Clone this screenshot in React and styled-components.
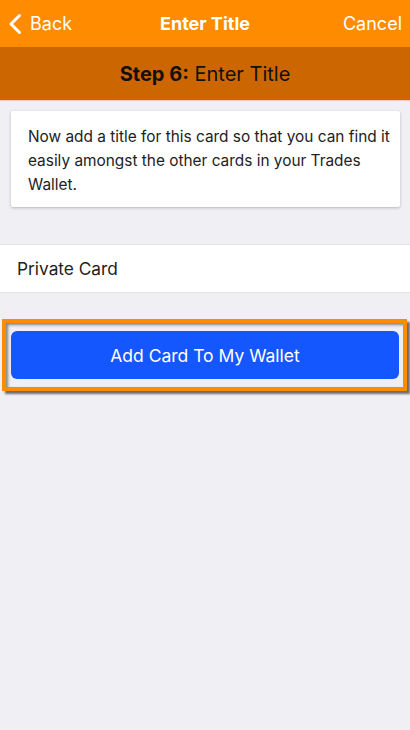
import React from "react";
import styled, { createGlobalStyle } from "styled-components";

const GlobalStyle = createGlobalStyle`
    html, body {
        margin: 0;
        padding: 0;
        background: #efeff4;
    }
    body {
        font-family: Inter, "Liberation Sans", sans-serif;
    }
`;

export default function App() {
    return (
        <>
            <GlobalStyle />
            <Page>
                <NavBar>
                    <NavButton>
                        <svg width="14" height="22" viewBox="0 0 14 22">
                            <path
                                d="M11.5 2.5 L3 11 L11.5 19.5"
                                fill="none"
                                stroke="#fff"
                                strokeWidth="3"
                                strokeLinecap="round"
                                strokeLinejoin="round"
                            />
                        </svg>
                        Back
                    </NavButton>
                    <NavTitle>Enter Title</NavTitle>
                    <NavButton>Cancel</NavButton>
                </NavBar>
                <StepBar>
                    <b>Step 6:</b> Enter Title
                </StepBar>
                <Content>
                    <InfoCard>
                        Now add a title for this card so that you can find it
                        easily amongst the other cards in your Trades Wallet.
                    </InfoCard>
                    <TitleRow>Private Card</TitleRow>
                    <Highlight>
                        <AddButton>Add Card To My Wallet</AddButton>
                    </Highlight>
                </Content>
            </Page>
        </>
    );
}

const Page = styled.div`
    width: 410px;
    min-height: 730px;
    background: #efeff4;
`;

const NavBar = styled.div`
    height: 47px;
    background: #ff8c00;
    display: flex;
    align-items: center;
    justify-content: space-between;
    padding: 0 8px;
    box-sizing: border-box;
    position: relative;
`;

const NavButton = styled.div`
    display: flex;
    align-items: center;
    gap: 8px;
    color: #fff;
    font-size: 18px;
`;

const NavTitle = styled.div`
    position: absolute;
    left: 0;
    right: 0;
    text-align: center;
    color: #fff;
    font-size: 18px;
    font-weight: 700;
    pointer-events: none;
`;

const StepBar = styled.div`
    height: 53px;
    background: #cc6600;
    border-bottom: 1px solid #f5c9b8;
    display: flex;
    align-items: center;
    justify-content: center;
    color: #111;
    font-size: 20px;
    white-space: pre;

    b {
        font-weight: 700;
    }
`;

const Content = styled.div`
    display: flex;
    flex-direction: column;
    padding-top: 10px;
`;

const InfoCard = styled.div`
    margin: 0 10px 0 11px;
    background: #fff;
    border-radius: 2px;
    box-shadow: 0 1px 3px rgba(0, 0, 0, 0.25);
    padding: 14px 8px 10px 17px;
    font-size: 15.4px;
    line-height: 24px;
    color: #222;
`;

const TitleRow = styled.div`
    margin-top: 37px;
    height: 47px;
    background: #fff;
    border-top: 1px solid #e3e3e8;
    border-bottom: 1px solid #e3e3e8;
    display: flex;
    align-items: center;
    padding-left: 17px;
    font-size: 17.3px;
    color: #222;
`;

const Highlight = styled.div`
    margin: 26px 3px 0 2px;
    border: 4px solid #ff8c00;
    box-shadow: 3px 3px 2px rgba(0, 0, 0, 0.55), inset 2px 2px 3px rgba(0, 0, 0, 0.45);
    padding: 8px 4px 8px 5px;
    background: #efeff4;
`;

const AddButton = styled.div`
    height: 48px;
    background: #1457ff;
    border-radius: 6px;
    display: flex;
    align-items: center;
    justify-content: center;
    color: #fff;
    font-size: 17.5px;
`;
